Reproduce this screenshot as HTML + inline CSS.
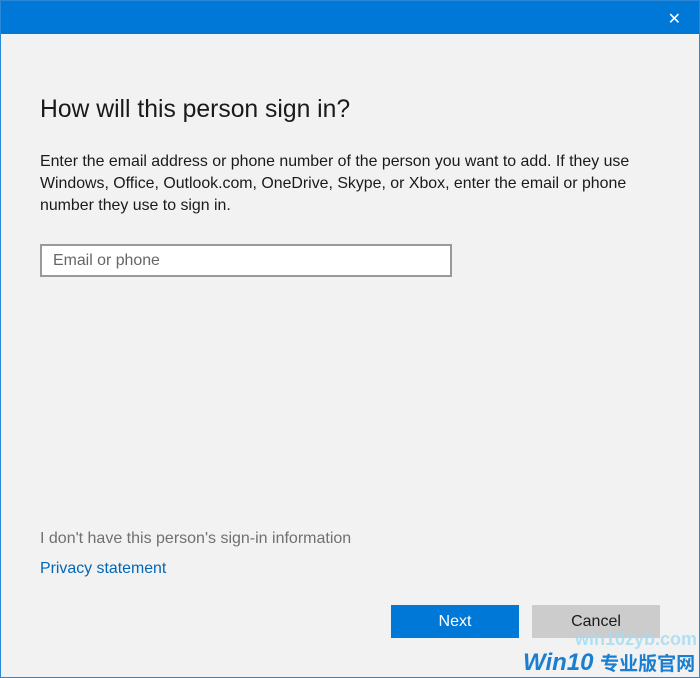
<!DOCTYPE html>
<html><head><meta charset="utf-8"><style>
html,body{margin:0;width:700px;height:678px;overflow:hidden;font-family:"Liberation Sans","Noto Sans CJK SC",sans-serif;}
.win{position:absolute;left:0;top:0;width:698px;height:676px;border:1px solid #2b88d8;background:#f2f2f2;overflow:hidden;}
.tb{position:absolute;left:0;top:0;width:698px;height:33px;background:#0078d7;}
.x{position:absolute;right:18px;top:8px;color:#fff;font-size:16px;}
h1{position:absolute;left:39px;top:95px;margin:0;font-weight:normal;font-size:24.7px;color:#1a1a1a;white-space:nowrap;}
p{position:absolute;left:39px;top:150px;margin:0;width:600px;font-size:15.9px;line-height:22px;color:#1a1a1a;}
.in{position:absolute;left:39px;top:243px;height:29px;border:2px solid #999;background:#fff;font-size:15.9px;color:#666;line-height:29px;padding-left:11px;width:397px;}
.l1{position:absolute;left:39px;top:529px;font-size:16px;color:#707070;white-space:nowrap;}
.l2{position:absolute;left:39px;top:559px;font-size:15.9px;color:#0067b8;white-space:nowrap;}
.b{position:absolute;top:604px;width:128px;height:33px;line-height:33px;text-align:center;font-size:16px;}
.w1{position:absolute;left:574px;top:628px;font-size:18px;font-weight:bold;color:#a6dcf2;opacity:.85;white-space:nowrap;}
.w2{position:absolute;left:522px;top:648px;font-size:24px;font-weight:bold;font-style:italic;color:#1a7fd0;white-space:nowrap;}
</style></head><body>
<div class="win">
<div class="tb"><span class="x">✕</span></div>
<h1>How will this person sign in?</h1>
<p>Enter the email address or phone number of the person you want to add. If they use Windows, Office, Outlook.com, OneDrive, Skype, or Xbox, enter the email or phone number they use to sign in.</p>
<div class="in">Email or phone</div>
<div class="l1">I don't have this person's sign-in information</div>
<div class="l2">Privacy statement</div>
<div class="b" style="left:390px;background:#0078d7;color:#fff;">Next</div>
<div class="b" style="left:531px;background:#ccc;color:#1a1a1a;">Cancel</div>
<div class="w1">win10zyb.com</div>
<div class="w2">Win10 <span style="font-style:normal;font-size:19px">专业版官网</span></div>
</div>
</body></html>
